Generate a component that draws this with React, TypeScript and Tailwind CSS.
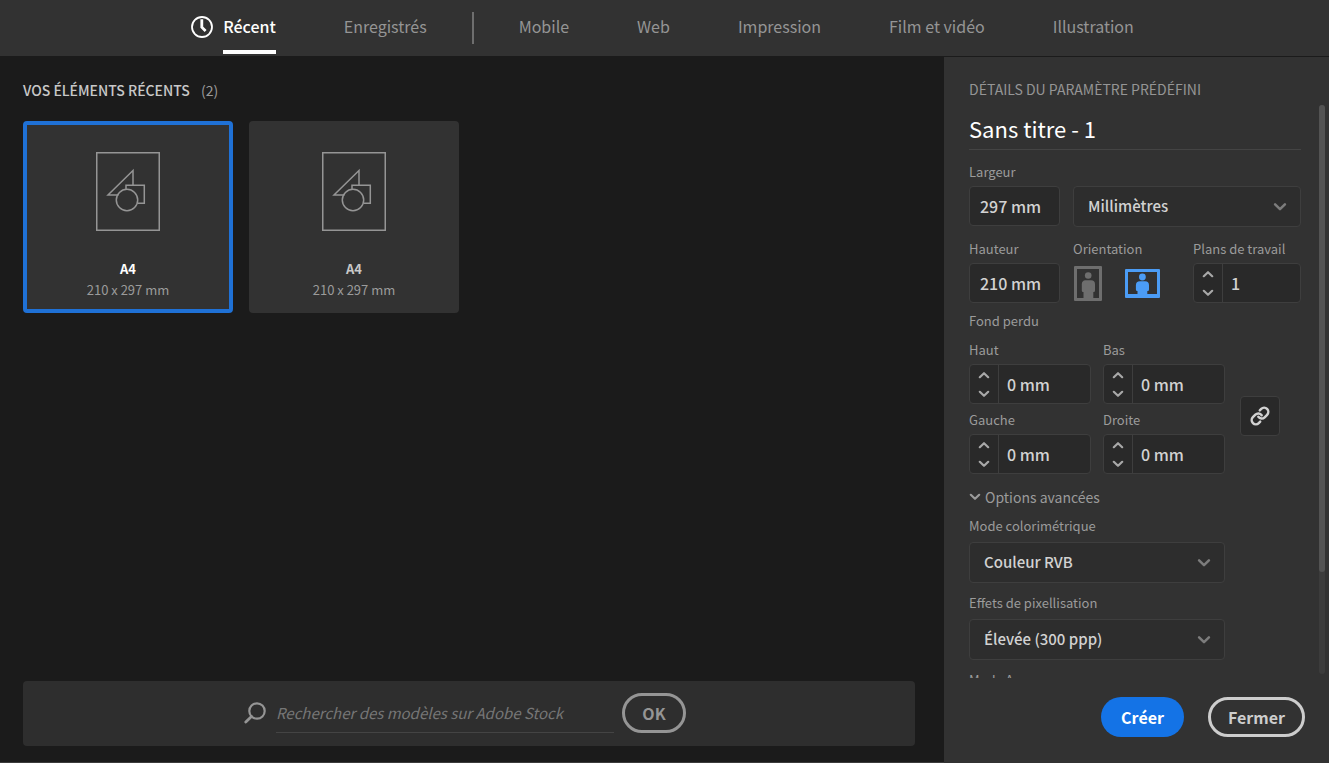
import { useState } from "react";
import { Link } from "lucide-react";

const presetTabs = ["Mobile", "Web", "Impression", "Film et vidéo", "Illustration"];

const recentItems = [
  { id: 1, name: "A4", size: "210 x 297 mm" },
  { id: 2, name: "A4", size: "210 x 297 mm" },
];

function Chevron({ className, up = false }: { className: string; up?: boolean }) {
  return (
    <svg className={className} viewBox="0 0 12 8" fill="none" stroke="currentColor" strokeWidth="2.2" strokeLinecap="round" strokeLinejoin="round">
      <path d={up ? "M1.8 6.2L6 2.2l4.2 4" : "M1.8 1.8L6 5.8l4.2-4"} />
    </svg>
  );
}

function ClockIcon() {
  return (
    <svg className="w-[22px] h-[22px]" viewBox="0 0 22 22" fill="none" stroke="currentColor">
      <circle cx="11" cy="11" r="10" strokeWidth="1.8" />
      <path d="M10.8 3.2v8l3.8 3.8" strokeWidth="2.8" />
    </svg>
  );
}

function DocumentIcon() {
  return (
    <svg className="w-16 h-[79px] text-[#959595]" viewBox="0 0 64 79" fill="none" stroke="currentColor" strokeWidth="1.5">
      <rect x="0.75" y="0.75" width="62.5" height="77.5" />
      <path d="M37 33.3V18.5L12 43h10.5" />
      <path d="M30 37v-3.7h18.3v18h-6.8" />
      <circle cx="31" cy="48" r="10.7" />
    </svg>
  );
}

function PortraitIcon() {
  return (
    <svg className="w-7 h-[35px]" viewBox="0 0 28 35" fill="currentColor">
      <path fillRule="evenodd" d="M1 0h26a1 1 0 0 1 1 1v33a1 1 0 0 1-1 1H1a1 1 0 0 1-1-1V1a1 1 0 0 1 1-1zM3 3v29h22V3z" />
      <circle cx="14.2" cy="9.5" r="3.3" />
      <path d="M11.5 14.2h5.5a4 4 0 0 1 4 4v6.3a1.5 1.5 0 0 1-1.7 1.5V33H9.5v-7A1.5 1.5 0 0 1 7.8 24.5v-6.3a4 4 0 0 1 3.7-4z" />
    </svg>
  );
}

function LandscapeIcon() {
  return (
    <svg className="w-[35px] h-[29px]" viewBox="0 0 35 29" fill="currentColor">
      <path fillRule="evenodd" d="M1 0h33a1 1 0 0 1 1 1v27a1 1 0 0 1-1 1H1a1 1 0 0 1-1-1V1a1 1 0 0 1 1-1zM3 3v22h29V3z" />
      <circle cx="17.4" cy="8" r="3.4" />
      <path d="M15 12.2h5a4 4 0 0 1 4 4v4.3a1.5 1.5 0 0 1-1.7 1.5V26h-9.8v-4a1.5 1.5 0 0 1-1.6-1.5v-4.3a4 4 0 0 1 4-4z" />
    </svg>
  );
}

function Stepper({ id, label, defaultValue }: { id: string; label: string; defaultValue: string }) {
  return (
    <div>
      <label htmlFor={id} className="block text-[13px] leading-5 mb-1 text-[#9b9b9b]">{label}</label>
      <div className="flex h-10 rounded border border-[#3e3e3e] bg-[#292929]">
        <div className="w-7 flex flex-col justify-center items-center gap-[11px] text-[#a8a8a8] shrink-0">
          <button type="button" aria-label="+"><Chevron up className="w-3 h-2" /></button>
          <button type="button" aria-label="-"><Chevron className="w-3 h-2" /></button>
        </div>
        <input id={id} defaultValue={defaultValue} className="w-full min-w-0 px-2 border-l border-[#3e3e3e] bg-transparent text-base font-medium text-[#d2d2d2] outline-none" />
      </div>
    </div>
  );
}

function SizeField({ id, label, defaultValue }: { id: string; label: string; defaultValue: string }) {
  return (
    <div className="w-[91px] shrink-0">
      <label htmlFor={id} className="block text-[13px] leading-5 mb-1 text-[#9b9b9b]">{label}</label>
      <input id={id} defaultValue={defaultValue} className="w-full h-10 px-2.5 rounded border border-[#3e3e3e] bg-[#292929] text-base font-medium text-[#d2d2d2] outline-none" />
    </div>
  );
}

function Dropdown({ id, label, options }: { id: string; label?: string; options: string[] }) {
  return (
    <div className="relative">
      <select id={id} aria-label={label} className="w-full h-[41px] pl-3.5 pr-10 appearance-none rounded border border-[#3e3e3e] bg-[#2d2d2d] text-[15px] font-medium text-[#d2d2d2] outline-none">
        {options.map((option) => (
          <option key={option}>{option}</option>
        ))}
      </select>
      <Chevron className="absolute right-3.5 top-4 w-[14px] h-2.5 text-[#7c7c7c] pointer-events-none" />
    </div>
  );
}

export default function App() {
  const [selected, setSelected] = useState(1);
  const [orientation, setOrientation] = useState("landscape");

  return (
    <div className="h-screen flex flex-col bg-[#1b1b1b] font-['Noto_Sans_CJK_JP','Noto_Sans',sans-serif]">
      {/* Top navigation */}
      <nav className="h-14 shrink-0 flex justify-center pr-1 bg-[#323232] text-base text-[#959595]">
        <div className="flex gap-[68px]">
          <a href="#recent" className="h-[54px] flex items-center gap-2.5 text-white font-medium">
            <ClockIcon />
            <span className="h-[54px] leading-[52px] border-b-4 border-white">Récent</span>
          </a>
          <a href="#saved" className="leading-[52px]">Enregistrés</a>
        </div>
        <div className="w-0.5 h-8 mt-3 mx-[45px] bg-[#6e6e6e]" />
        <div className="flex gap-[68px]">
          {presetTabs.map((tab) => (
            <a key={tab} href="#presets" className="leading-[52px] whitespace-nowrap">{tab}</a>
          ))}
        </div>
      </nav>

      <div className="flex flex-1 min-h-0">
        {/* Recent items */}
        <main className="flex-1 min-w-0 flex flex-col pl-[23px] pr-[29px] pt-6 pb-4 border-b border-[#3c3c3c]">
          <h1 className="text-sm leading-5 font-medium text-[#c8c8c8]">
            VOS ÉLÉMENTS RÉCENTS <span className="ml-2 font-normal text-[#9b9b9b]">(2)</span>
          </h1>

          <div className="flex flex-wrap gap-4 mt-[21px]">
            {recentItems.map((item) => (
              <button
                key={item.id}
                type="button"
                onClick={() => setSelected(item.id)}
                className={`w-[210px] h-48 rounded flex flex-col items-center border-4 bg-[#323232] pt-[27px] ${
                  selected === item.id ? "border-[#1f71d6] text-white" : "border-[#323232] text-[#c8c8c8]"
                }`}
              >
                <DocumentIcon />
                <span className="mt-7 text-[13px] leading-5 font-bold">{item.name}</span>
                <span className="text-[13px] leading-[22px] text-[#9b9b9b]">{item.size}</span>
              </button>
            ))}
          </div>

          {/* Stock search */}
          <form className="mt-auto h-[65px] shrink-0 flex items-center justify-center pr-2 pb-0.5 rounded bg-[#2e2e2e]" onSubmit={(e) => e.preventDefault()}>
            <svg className="w-[22px] h-[22px] text-[#959595]" viewBox="0 0 22 22" fill="none" stroke="currentColor" strokeLinecap="round">
              <circle cx="13" cy="9" r="7.7" strokeWidth="2.2" />
              <path d="M7.5 14.5L1.8 20" strokeWidth="2.8" />
            </svg>
            <input
              aria-label="Rechercher des modèles sur Adobe Stock"
              placeholder="Rechercher des modèles sur Adobe Stock"
              className="w-[338px] h-10 ml-2.5 mr-2 border-b border-[#444444] bg-transparent text-[15px] italic text-[#c8c8c8] placeholder:text-[#767676] outline-none"
            />
            <button type="submit" className="w-16 h-10 rounded-full border-3 border-[#959595] text-base font-bold text-[#959595]">OK</button>
          </form>
        </main>

        {/* Preset details */}
        <aside className="w-[385px] shrink-0 mt-px pl-[25px] flex flex-col bg-[#323232]">
          <h2 className="pt-[22px] h-12 shrink-0 text-sm leading-5 text-[#959595]">DÉTAILS DU PARAMÈTRE PRÉDÉFINI</h2>

          <div className="flex flex-1 min-h-0">
            <div className="flex-1 min-w-0 overflow-y-auto [scrollbar-width:none]">
              <input aria-label="Nom" defaultValue="Sans titre - 1" className="block w-full h-[45px] pt-0.5 border-b border-[#444444] bg-transparent text-[22px] text-white outline-none" />

              <div className="flex gap-[13px] mt-3">
                <SizeField id="width" label="Largeur" defaultValue="297 mm" />
                <div className="flex-1 mt-6">
                  <Dropdown id="units" label="Unités" options={["Millimètres", "Centimètres", "Pixels"]} />
                </div>
              </div>

              <div className="flex mt-3">
                <SizeField id="height" label="Hauteur" defaultValue="210 mm" />
                <fieldset className="ml-[13px] flex-1">
                  <legend className="text-[13px] leading-5 mb-1 text-[#9b9b9b]">Orientation</legend>
                  <div className="flex h-10 items-center gap-[23px] pl-px">
                    <button type="button" aria-label="Portrait" onClick={() => setOrientation("portrait")} className={orientation === "portrait" ? "text-[#4b9cf5]" : "text-[#6e6e6e]"}>
                      <PortraitIcon />
                    </button>
                    <button type="button" aria-label="Paysage" onClick={() => setOrientation("landscape")} className={orientation === "landscape" ? "text-[#4b9cf5]" : "text-[#6e6e6e]"}>
                      <LandscapeIcon />
                    </button>
                  </div>
                </fieldset>
                <div className="w-[108px] shrink-0">
                  <Stepper id="artboards" label="Plans de travail" defaultValue="1" />
                </div>
              </div>

              <h3 className="mt-2 text-[13px] leading-5 text-[#9b9b9b]">Fond perdu</h3>
              <div className="flex items-center gap-[15px] mt-[9px]">
                <div className="grid grid-cols-2 gap-x-3 gap-y-1.5 w-64">
                  <Stepper id="bleed-top" label="Haut" defaultValue="0 mm" />
                  <Stepper id="bleed-bottom" label="Bas" defaultValue="0 mm" />
                  <Stepper id="bleed-left" label="Gauche" defaultValue="0 mm" />
                  <Stepper id="bleed-right" label="Droite" defaultValue="0 mm" />
                </div>
                <button type="button" aria-label="Lier" className="w-10 h-10 mt-[18px] flex items-center justify-center rounded border border-[#3e3e3e] bg-[#292929] text-[#d2d2d2]">
                  <Link size={20} strokeWidth={3} />
                </button>
              </div>

              <button type="button" className="flex items-center gap-1 mt-[11px] text-sm leading-6 text-[#9b9b9b]">
                <Chevron className="w-3 h-2" />
                Options avancées
              </button>

              <div className="w-64 mt-[7px]">
                <label htmlFor="color-mode" className="block text-[13px] leading-5 mb-1.5 text-[#9b9b9b]">Mode colorimétrique</label>
                <Dropdown id="color-mode" options={["Couleur RVB", "Couleur CMJN"]} />
                <label htmlFor="raster" className="block text-[13px] leading-5 mt-2.5 mb-1.5 text-[#9b9b9b]">Effets de pixellisation</label>
                <Dropdown id="raster" options={["Élevée (300 ppp)", "Moyenne (150 ppp)", "Écran (72 ppp)"]} />
                <label htmlFor="preview" className="block text-[13px] leading-5 mt-2.5 mb-1.5 text-[#9b9b9b]">Mode Aperçu</label>
                <Dropdown id="preview" options={["Par défaut", "Pixel", "Surimpression"]} />
              </div>
            </div>
            <div className="w-1.5 ml-[18px] mr-1 mb-1 rounded-full bg-[#3c3c3c]">
              <div className="h-[82%] rounded-full bg-[#535353]" />
            </div>
          </div>

          <div className="h-[85px] shrink-0 flex justify-end items-start gap-6 pt-[19px] pr-6">
            <button type="button" className="h-10 px-5 rounded-full bg-[#1473e6] text-base font-bold text-white">Créer</button>
            <button type="button" className="h-10 px-[17px] rounded-full border-3 border-[#cdcdcd] text-base font-bold text-[#cdcdcd]">Fermer</button>
          </div>
        </aside>
      </div>
    </div>
  );
}
